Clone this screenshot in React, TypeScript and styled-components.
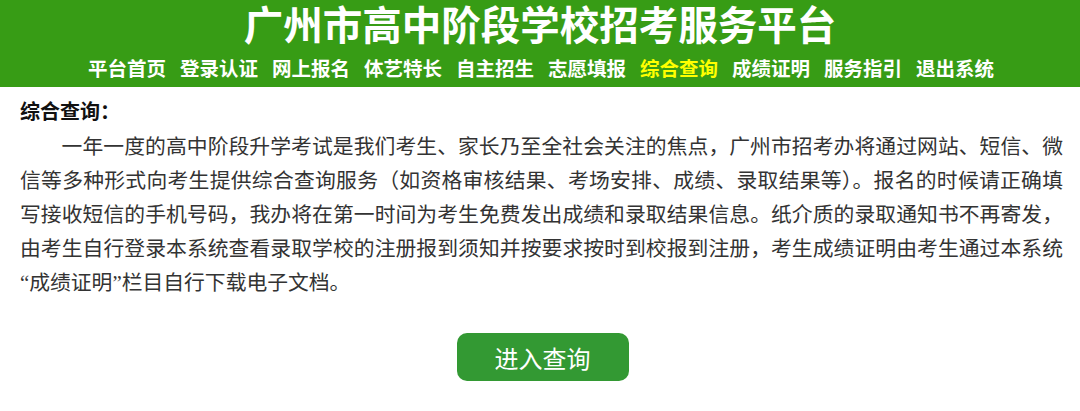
import React from "react";
import styled, { createGlobalStyle } from "styled-components";

const Global = createGlobalStyle`
  html, body { margin: 0; padding: 0; background: #fff; }
  body { font-family: "Noto Sans CJK SC", "Noto Sans", sans-serif; }
`;

const Header = styled.header`
  background: #379c15;
  height: 87px;
  display: flex;
  flex-direction: column;
  align-items: center;
  color: #fff;
`;

const Title = styled.h1`
  margin: 0;
  font-size: 39.5px;
  line-height: 45px;
  font-weight: 700;
  letter-spacing: 0;
  white-space: nowrap;
`;

const Nav = styled.nav`
  display: flex;
  gap: 14px;
  margin-top: 10px;
  padding-left: 2px;
`;

const NavItem = styled.a<{ $active?: boolean }>`
  font-size: 19.5px;
  line-height: 26px;
  font-weight: 700;
  color: ${(p) => (p.$active ? "#ffff00" : "#ffffff")};
  text-decoration: none;
  white-space: nowrap;
`;

const Main = styled.main`
  padding: 10px 17px 0 20px;
`;

const Heading = styled.h2`
  margin: 0;
  font-size: 20px;
  line-height: 28px;
  font-weight: 700;
  color: #111;
`;

const Para = styled.p`
  margin: 5px 0 0;
  font-family: "Liberation Serif", "Noto Sans CJK SC", serif;
  font-size: 20.8px;
  line-height: 34px;
  text-indent: 2em;
  text-align: justify;
  color: #333;
  font-weight: 400;
`;

const ButtonRow = styled.div`
  display: flex;
  justify-content: center;
  margin-top: 33px;
`;

const Button = styled.button`
  width: 172px;
  height: 48px;
  border: none;
  border-radius: 10px;
  background: #339933;
  color: #fff;
  font-family: "Noto Sans CJK SC", sans-serif;
  font-size: 24px;
  cursor: pointer;
  margin-left: 2px;
  padding: 0;
`;

const navItems = [
  "平台首页",
  "登录认证",
  "网上报名",
  "体艺特长",
  "自主招生",
  "志愿填报",
  "综合查询",
  "成绩证明",
  "服务指引",
  "退出系统",
];

export default function App() {
  return (
    <>
      <Global />
      <Header>
        <Title>广州市高中阶段学校招考服务平台</Title>
        <Nav>
          {navItems.map((n) => (
            <NavItem key={n} href="#" $active={n === "综合查询"}>
              {n}
            </NavItem>
          ))}
        </Nav>
      </Header>
      <Main>
        <Heading>综合查询：</Heading>
        <Para>
          一年一度的高中阶段升学考试是我们考生、家长乃至全社会关注的焦点，广州市招考办将通过网站、短信、微信等多种形式向考生提供综合查询服务（如资格审核结果、考场安排、成绩、录取结果等）。报名的时候请正确填写接收短信的手机号码，我办将在第一时间为考生免费发出成绩和录取结果信息。纸介质的录取通知书不再寄发，由考生自行登录本系统查看录取学校的注册报到须知并按要求按时到校报到注册，考生成绩证明由考生通过本系统<wbr />“成绩证明”栏目自行下载电子文档。
        </Para>
        <ButtonRow>
          <Button>进入查询</Button>
        </ButtonRow>
      </Main>
    </>
  );
}
